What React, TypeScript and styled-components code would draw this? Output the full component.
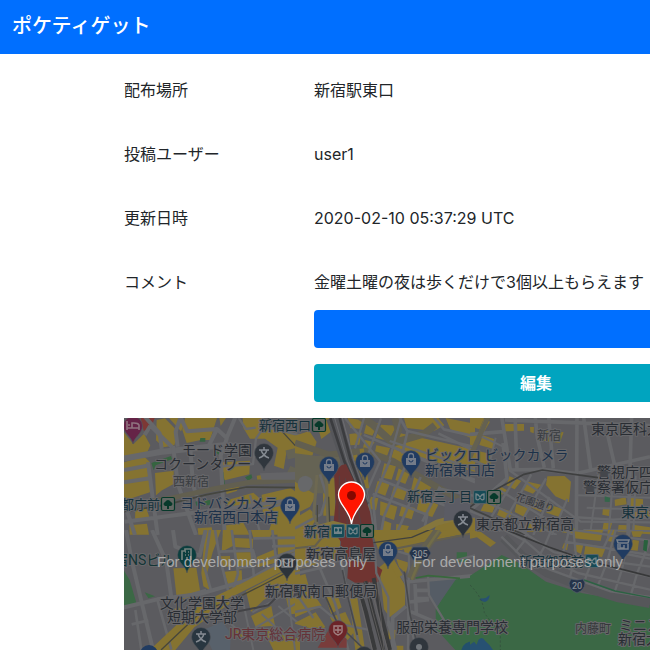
import React from "react";
import styled, { createGlobalStyle, css } from "styled-components";

const GlobalStyle = createGlobalStyle`
  *, *::before, *::after { box-sizing: border-box; }
  html, body { margin: 0; }
  body {
    background: #fff;
    color: #212529;
    font-family: Inter, "Noto Sans CJK JP", sans-serif;
    font-size: 16px;
    line-height: 24px;
  }
`;

const Page = styled.div`
  display: flex;
  flex-direction: column;
  min-height: 100vh;
  overflow: hidden;
`;

const Navbar = styled.header`
  display: flex;
  align-items: center;
  height: 54px;
  padding: 0 12px 2px;
  background: #006fff;
`;

const Brand = styled.a`
  color: #fff;
  font-size: 20px;
  font-weight: 500;
  line-height: 30px;
  text-decoration: none;
`;

const Content = styled.main`
  display: flex;
  flex: 1;
  flex-direction: column;
  padding: 24px 0 0 124px;
`;

const Details = styled.dl`
  display: grid;
  grid-template-columns: 190px minmax(444px, 1fr);
  row-gap: 40px;
  margin: 0;
`;

const Label = styled.dt``;

const Value = styled.dd`
  margin: 0;
  white-space: nowrap;
`;

const Actions = styled.div`
  display: grid;
  width: 444px;
  gap: 16px;
  margin: 16px 0 16px 190px;
`;

const Button = styled.button<{ $tone: "primary" | "info" }>`
  height: 38px;
  border: 0;
  border-radius: 4px;
  color: #fff;
  font: inherit;
  font-weight: 600;
  cursor: pointer;
  ${({ $tone }) =>
    $tone === "primary"
      ? css`background: #006fff;`
      : css`background: #00a4bf;`}
`;

const MapPanel = styled.section`
  flex: 1;
  display: flex;
  min-height: 232px;
  overflow: hidden;
  background: #5b5b60;
`;

const MapDrawing = styled.svg`
  display: block;
  width: 100%;
  height: auto;
  font-family: Roboto, "Noto Sans CJK JP", sans-serif;
`;

const Y = "#857331";
const ROAD = "#67686b";
const GREEN = "#3b6845";
const MAIN = "#625f50";

const Tile = ({ x, y, children }: { x: number; y: number; children: React.ReactNode }) => (
  <svg x={x} y={y} width="180" height="120" viewBox="0 0 540 360">{children}</svg>
);

type RoadProps = { d: string; w?: number; c?: string };
const Road = ({ d, w = 9, c = ROAD }: RoadProps) => (
  <path d={d} fill="none" stroke={c} strokeWidth={w} strokeLinejoin="round" />
);

type PlaceProps = { x: number; y: number; size?: number; color?: string; anchor?: "start" | "middle"; rotate?: number; children: string };
const Place = ({ x, y, size = 14, color = "#292d33", anchor = "start", rotate, children }: PlaceProps) => (
  <text
    x={x} y={y} fontSize={size} fill={color} textAnchor={anchor}
    stroke="#67676a" strokeWidth="2" strokeLinejoin="round" paintOrder="stroke"
    transform={rotate ? `rotate(${rotate} ${x} ${y})` : undefined}
  >{children}</text>
);

type PinProps = { x: number; y: number; color: string; kind: "bag" | "school" | "bed" | "hospital" | "shop" | "post" | "building" | "dot" };
const Pin = ({ x, y, color, kind }: PinProps) => (
  <g transform={`translate(${x} ${y})`}>
    <path d="M0 18C-1 11-9 8-9.5 0A9.5 9.5 0 1 1 9.5 0C9 8 1 11 0 18Z" fill={color} stroke="#53565b" strokeWidth=".6" />
    {kind === "bag" && <>
      <path d="M-5-2H5V5H-5Z" fill="#747c89" />
      <path d="M-2.5-2V-4A2.5 2.5 0 0 1 2.5-4V-2" fill="none" stroke="#747c89" strokeWidth="1.3" />
      <path d="M-2 0A2 2 0 0 0 2 0" fill="none" stroke={color} />
    </>}
    {kind === "school" && <path d="M0-6V-3M-5-3H5M-3-3Q-1 3 5 5M3-3Q1 3-5 5" fill="none" stroke="#858b92" strokeWidth="1.5" />}
    {kind === "bed" && <path d="M-6-5V4M-6 2H6V-1Q5-3 1-3H-1V2M6 2V4M-5-1H-3" fill="none" stroke="#907480" strokeWidth="1.6" />}
    {kind === "hospital" && <path d="M-4-4H4V2Q3 4 0 5Q-3 4-4 2ZM0-3V3M-3 0H3" fill="none" stroke="#a08182" strokeWidth="1.4" />}
    {kind === "shop" && <path d="M-6-4H6L5-1H-5ZM-5 0V5H5V0M-3 0V4H1V1" fill="none" stroke="#77808a" strokeWidth="1.5" />}
    {kind === "post" && <path d="M-5-4H5V4H-5ZM-5-3L0 1L5-3" fill="none" stroke="#777b81" strokeWidth="1.3" />}
    {kind === "building" && <path d="M-5 5V-4H-2V-6H4V5M-2-3H-1M1-3H2M-2 0H-1M1 0H2M0 5V2" fill="none" stroke="#72807c" strokeWidth="1.7" />}
    {kind === "dot" && <circle r="3" fill="#72767b" />}
  </g>
);

type StationProps = { x: number; y: number; kind: "tree" | "metro" | "train" };
const Station = ({ x, y, kind }: StationProps) => (
  <g transform={`translate(${x} ${y})`}>
    <rect x="-6.5" y="-6.5" width="13" height="13" rx="1.5" fill={kind === "tree" ? "#626763" : "#164b57"} stroke={kind === "tree" ? "#07392a" : "#536267"} strokeWidth="1.2" />
    {kind === "tree" && <path d="M-1 5V2H-3Q-6 0-3-2Q0-6 3-2Q6 0 3 2H1V5Z" fill="#07392a" />}
    {kind === "metro" && <path d="M-4-3Q-2-3 0 0Q2-3 4-3V2Q2 4 0 1Q-2 4-4 2Z" fill="none" stroke="#738488" strokeWidth="1.3" />}
    {kind === "train" && <><path d="M-4-4H4V3H-4Z" fill="#738488" /><path d="M-3-2H-1V0H-3M1-2H3V0H1M-3 5L-1 3M3 5L1 3" stroke="#164b57" fill="#164b57" /></>}
  </g>
);

const MapTerrain = () => (
  <>
    <rect x="124" y="418" width="526" height="232" fill="#5b5b5f" />
    <Tile x={120} y={415}>
      <path fill={Y} d="M12 52L40 88 72 56 91 91 82 112 12 124ZM12 142L72 124 90 142 94 230 12 257ZM105 174L161 167V207L126 226 108 241ZM110 15L135 10 174 50 163 91 130 97 108 76ZM147 9H180L191 31 183 49ZM195 9H291L270 75 242 75 200 84 187 45ZM298 9H318L302 33ZM307 142L390 137 388 178 314 196 301 169ZM368 9H430L446 40 530 55V125L500 108 491 162 462 152 473 98 435 71 390 71 370 39ZM410 182L452 176 470 198 413 202ZM315 219L367 204 350 228 320 237ZM310 259L400 233 421 252 400 276H330ZM425 239L512 219 540 240V340L490 359H443L461 304 429 299ZM310 332L370 323 389 359H310ZM233 340L275 337 279 359H235ZM46 283L78 276 89 310 45 319ZM28 331L81 326 87 359H29Z" />
      <path fill="#7d3835" d="M62 9H104L91 44 71 47Z" />
      <path fill="#366440" d="M94 144L153 123 156 133 107 151 101 166ZM241 69H256V80H239ZM287 85L300 100 296 119 286 111ZM300 171H310L315 210 304 201ZM226 260L270 255 273 270 229 272ZM375 187L394 178 397 188 385 198Z" />
      <Road d="M12 131L120 111 310 91 390 96" w={18} />
      <Road d="M70 0L119 55 125 102M90 31L156 96M91 32L74 60M184 0L167 50 173 95M178 0L202 49 291 42 320 69 349 0M291 42L267 91M321 69L302 121 314 360" w={12} />
      <Road d="M84 142L113 360M159 93L174 209 228 360M211 100L219 210 234 256M12 165L90 151M12 202L89 190M14 320L540 252M20 285L45 360" w={12} />
      <Road d="M300 155L399 147 408 71 433 35 540 61M402 203L540 199M311 300L540 260M390 240L422 360M350 0L378 42 407 38" w={7} />
      <Road d="M12 270L150 250 280 222 390 202 540 195" w={15} c={MAIN} />
      <Road d="M500 120L540 110M505 165L540 180" w={28} c="#656354" />
      <Road d="M500 0L540 28" w={18} c={MAIN} />
      <Road d="M12 290L140 269 260 239 380 216 540 218" w={5} c="#454640" />
      <Road d="M435 0L472 34 540 107" w={4} c="#454640" />
      <path d="M420 175L540 170V194H425Z" fill="#646467" />
    </Tile>
    <Tile x={120} y={530}>
      <path fill={Y} d="M160 115L229 113 242 193 171 212ZM255 0H303L278 67 258 142 270 181 250 169 244 130 250 62ZM309 0H334L344 45 305 65ZM343 24L399 26V55L343 51ZM342 67H397V105L355 119ZM300 79L330 78 332 111 308 108ZM313 125L365 121 367 164 327 174ZM378 184L540 98V150L430 211 393 246ZM393 0H455L451 24 401 27ZM472 0H540V60L474 81ZM410 81L465 58V99L411 112ZM160 240L175 229 188 247 153 262ZM129 345L265 221 323 197 329 221 223 292 166 360H119ZM393 258L454 228 465 287 407 291ZM432 302L477 295 540 330V360H460ZM490 167L540 155V250L509 253ZM340 291L380 304 370 321 324 319Z" />
      <path fill={GREEN} d="M12 122L29 150 49 218 12 233ZM74 187L105 199 85 205Z" />
      <path fill="#58616b" d="M248 301L306 275 333 310 330 360H277Z" />
      <Road d="M18 0L35 90 99 360M96 0L139 95 155 210M159 0L166 50 239 77 257 0M0 235L112 208 239 192 390 148 540 63" w={12} />
      <Road d="M46 240L64 360M35 283L85 271M112 209L154 359M155 210L258 180M270 0L253 110 273 181M285 0L299 81 324 181M335 0L354 131 335 193M299 65L399 61 410 100 540 54M352 113L399 109M389 0L402 144M457 0L472 115M400 25L540 23M456 49L540 47" w={8} />
      <Road d="M370 220L400 360M397 247L500 190M406 293L540 213M500 160L525 360M330 280L390 330M425 252L509 330M475 228L540 284" w={6} />
      <Road d="M106 360L242 233 355 178 540 84" w={23} c={Y} />
      <Road d="M123 360L245 244 348 205 422 168 540 107" w={4} c="#47463c" />
      <Road d="M236 267L355 244 445 226 481 191 540 175" w={6} c="#434346" />
    </Tile>
    <Tile x={295} y={415}>
      <path fill={Y} d="M0 62L43 48 65 81 52 122 0 132ZM60 9H110V49L79 72ZM158 9L205 16 198 42 166 39ZM163 57L200 53 193 89 166 91ZM217 14L250 26 232 62 207 55ZM258 29L305 32 280 78 242 68ZM313 54L540 104V170L420 141 328 110 294 91ZM327 9H430L448 31 417 48 335 39ZM452 9L540 26V74L466 43ZM209 75L239 82 220 107 203 104ZM244 91L285 99 274 129 238 119ZM297 101L332 118 320 146 287 136ZM0 190L60 178 73 223 45 275 0 298ZM83 188H119L121 302H85ZM268 145L303 154 290 194 258 187ZM311 160L344 175 331 207 301 195ZM248 198L284 206 271 242 239 230ZM298 211L337 225 326 256 288 244ZM358 183L413 211 392 242 348 226ZM228 245L250 250 243 286 216 280ZM256 259L307 275 297 315 255 300ZM321 270L360 279 350 313 312 302ZM374 244L430 269 412 306 364 291ZM265 316L289 325 286 350H258ZM425 325L540 292V360H414ZM304 327L342 333 330 360H302ZM0 310L45 283 68 307 45 342 0 350Z" />
      <path fill="#656354" d="M0 115L65 123 139 112 131 171 95 190 90 235 54 235 0 200Z" />
      <path fill="#67686a" d="M14 190Q30 175 48 190Q60 205 43 225Q20 238 12 222Q4 205 14 190Z" />
      <Road d="M0 83L101 119 210 107 295 139 412 208 540 280" w={19} c={MAIN} />
      <Road d="M195 5L231 27 294 84 388 56 420 31M294 84L310 45 300 9" w={22} c="#625f51" />
      <Road d="M150 9L204 76 255 139 215 230 238 350M207 9L180 100M258 10L221 113M318 9L284 132M206 60L540 194M237 73L540 202M284 78L540 163" w={7} />
      <Road d="M286 133L234 256 244 360M331 153L267 304 257 360M377 186L303 360M252 193L540 307M233 237L397 299 384 360M435 215L382 320M540 243L433 221" w={8} />
      <Road d="M309 0L337 48 540 96M410 0L447 43 540 64M338 48L322 116M430 55L540 109M0 340L78 298 95 243 75 178" w={8} />
      <Road d="M200 101L216 220M180 120L205 230" w={13} c={Y} />
      <Road d="M112 9L152 125 190 210 205 270" w={38} c="#55565a" />
      <Road d="M106 9L148 139 180 210M134 9L166 130 215 270" w={8} c="#3b3c3f" />
      <Road d="M119 9L157 139 194 230M142 9L177 139 220 260" w={2} c="#75767a" />
      <path fill="#6b3432" d="M139 151L153 147 176 195 206 238 225 290 235 360H112L122 260 117 173Z" />
      <Road d="M133 182L132 360M151 190L158 360M180 240L205 360" w={3} c="#574044" />
      <Road d="M66 180L56 300 80 360M94 173L100 360" w={9} c="#6d6852" />
      <Road d="M67 270V320M101 245L105 345" w={4} c="#48483f" />
      <Road d="M0 357L115 327 211 351 303 360M356 360L426 323 540 292" w={18} c="#85763c" />
      <path fill="#5b5c64" d="M449 263L491 248 540 273V307L446 319Z" />
    </Tile>
    <Tile x={295} y={530}>
      <path fill={Y} d="M0 0H135V86L62 103 0 121ZM0 141L31 132 42 172 80 227 0 262ZM229 0H540L475 19 375 38 320 60 249 57ZM253 112L284 87 331 167 330 228 284 262 267 238ZM0 278L62 247 91 291 72 303 0 281ZM91 198L126 192 140 232 108 252ZM105 262L151 246 178 305 158 330 127 300ZM162 203L187 203 210 360H181ZM326 55L350 48 352 80 330 73ZM281 299L302 300 300 328H280ZM304 86L342 98 332 130 312 111ZM283 347H325V360H282Z" />
      <Road d="M0 119L58 94 139 92 150 156 192 346M49 55L120 220 160 360M0 131L84 112 145 84" w={8} />
      <path fill="#703431" d="M112 0H220L232 25 246 108 262 120 249 157 180 158 157 145 160 99 134 77 138 35Z" />
      <path fill={GREEN} d="M482 142L540 132V360H481L423 297 422 238ZM485 67L516 67V96L485 95Z" />
      <path fill="#555c65" d="M401 143L489 139 425 231 401 195Z" />
      <path fill="#793c3b" d="M111 285L155 327V353H68L93 313Z" />
      <Road d="M284 82L333 156 343 254 365 360M333 156L540 137M344 216L402 209M347 245L430 280M360 162L364 249M360 181H401M362 206H401M333 229L293 262V360M280 273L302 360" w={11} />
      <Road d="M0 246L75 230 140 283 233 302M0 186L55 264M240 60L244 130 280 202 280 289M300 62L342 74 339 360M399 139L402 195 465 300M445 100L540 76" w={7} />
      <Road d="M187 160L213 246 240 360M211 154L235 251 265 360M236 144L256 246 285 360" w={12} c="#393a3b" />
      <Road d="M183 160L232 360M209 155L263 360M223 155L278 360M245 130L267 360" w={2} c="#6d6a68" />
      <Road d="M92 200L128 282 210 360M142 120L160 208 187 315M328 125L345 252 370 360" w={5} c="#48494c" />
      <Road d="M0 22L45 38 110 0M249 50L390 15 540 0M248 28L284 82 315 139" w={17} c={Y} />
      <Road d="M235 38L350 22 430 -12" w={4} c="#40413e" />
      <Road d="M0 55L60 48 100 0M273 91L300 56 540 8" w={6} c="#635f50" />
      <Road d="M347 145L378 71 430 0" w={25} c="#646150" />
      <Road d="M350 149L380 77 433 0" w={8} c="#716c48" />
      <Road d="M362 144L400 137 495 145" w={5} c="#39683c" />
      <path d="M499 360Q505 333 540 334V360Z" fill="#22506c" />
    </Tile>
    <Tile x={470} y={415}>
      <path fill={Y} d="M0 9H42L28 43 0 33ZM42 11L60 20 36 61 25 54ZM105 27H162V47L105 49ZM180 36L192 36 191 55 181 51ZM205 45L281 52 269 84 205 75ZM0 49L26 61 12 92 0 89ZM38 61L72 72 70 102 28 90ZM0 103L64 117 61 149 0 140ZM116 149L125 161 115 164ZM232 184L284 183 303 200 297 262 256 244 228 210ZM118 184L154 198 134 223 109 211ZM174 200L214 209 189 236 159 224ZM85 211L112 226 96 239 80 229ZM45 260L78 267 67 293 32 287ZM90 278L126 291 117 315 81 300ZM139 267L181 282 163 306 134 291ZM176 247L229 262 213 291 168 270ZM237 269L281 282 270 307 229 293ZM399 277L421 281 417 303 397 299ZM434 254L467 247 470 268 435 273ZM477 247L519 253V276L478 273ZM488 291L540 287V312L490 310ZM446 330L477 331 475 352 443 351ZM402 318L427 321 419 350 397 345ZM170 321L228 330 220 350H161ZM286 333L322 343 315 358 276 352ZM488 329L540 337V358L487 354Z" />
      <Road d="M0 58L100 50M105 15L540 32M99 84L111 191 0 287M94 0L121 165 217 163 319 176M135 0L141 166M195 0L202 68 223 158M236 9L250 160M321 0L319 360M340 0L363 171M412 55L440 177M485 0L474 360M540 125L326 174" w={11} />
      <Road d="M117 165L332 320 540 322M84 223L308 360M42 258L260 360M0 288L176 360M138 187L55 320M184 178L87 349M228 190L132 360M238 246L190 360M292 252L245 360M306 306L430 314 540 308" w={7} />
      <Road d="M353 203L540 219M323 241L540 248M385 180L360 360M430 181L416 355M497 182L490 360M350 278L540 284M340 345L540 348M0 131L69 162M24 60L98 94M77 68L61 134" w={6} />
      <Road d="M57 0L0 126" w={14} c="#646151" />
      <Road d="M0 276L51 238 162 178 217 165 384 188" w={5} c="#3e3f3f" />
      <Road d="M0 279L54 303 138 349 170 360" w={5} c="#424342" />
      <path d="M404 244L420 248 419 261 404 260Z" fill="#34664a" />
    </Tile>
    <Tile x={470} y={530}>
      <path fill={Y} d="M0 0L33 6 78 38 61 51 21 22 0 26ZM309 0H399L392 33 312 25ZM282 40L295 39 291 61 276 55ZM319 38L340 44 333 72 311 61ZM347 43L408 51 396 81 342 73ZM488 29L507 32 503 62 481 60ZM414 0H436L427 36 410 32ZM484 4H520L511 21 489 20Z" />
      <path fill={GREEN} d="M95 75L149 100 228 155 338 190 455 210 540 224V360H0V137L63 97Z" />
      <Road d="M101 23L157 80 230 127 324 165 441 202 540 220" w={28} c="#56575a" />
      <Road d="M94 20L151 76 240 119 328 151 422 184 540 201" w={7} />
      <Road d="M102 0L165 32 217 77 324 129 540 179M150 0L251 66 394 107 540 140M136 67L163 33 168 0M193 104L223 50 244 0M248 123L285 54 297 0M300 140L318 77 310 0M342 157L372 75M384 166L412 94 437 0M433 189L456 118 480 0M482 197L502 128 540 33M284 35L540 75M313 0L540 32M253 67L450 98 540 110M400 55L426 0M469 72L540 86" w={7} />
      <Road d="M110 0L236 51 357 93 540 139" w={5} c="#373839" />
      <path d="M34 205Q46 208 59 195Q58 212 45 216Q34 216 28 208ZM0 344L12 335 20 344 25 330Q37 317 45 332L59 346 69 360H0Z" fill="#275172" />
      <path d="M0 165Q39 203 43 248Q60 273 91 310L91 360" fill="none" stroke="#344c3c" strokeWidth="2" strokeDasharray="7 6" />
      <path d="M342 150L435 183 540 203" fill="none" stroke="#2c6243" strokeWidth="4" />
      <path d="M522 30L534 31 530 65 519 60Z" fill="#28613d" />
    </Tile>
  </>
);

const StationMap = () => (
  <MapDrawing viewBox="124 418 526 232" preserveAspectRatio="xMinYMin slice" role="img" aria-label="新宿駅周辺の地図">
    <MapTerrain />
    <Place x={259} y={430} size={13} color="#15313b">新宿西口</Place>
    <Place x={182} y={455}>モード学園</Place>
    <Place x={154} y={469}>コクーンタワー</Place>
    <Place x={173} y={486} size={12} color="#393c40">西新宿</Place>
    <Place x={121} y={509} size={13} color="#15313b">都庁前</Place>
    <Place x={180} y={508} color="#1c3149">ヨドバシカメラ</Place>
    <Place x={194} y={522} color="#1c3149">新宿西口本店</Place>
    <Place x={425} y={460} color="#1c3149">ビックロ ビックカメラ</Place>
    <Place x={425} y={475} color="#1c3149">新宿東口店</Place>
    <Place x={537} y={440} size={12} color="#393c40">新宿</Place>
    <Place x={591} y={434}>東京医科大学</Place>
    <Place x={597} y={477}>警視庁四谷</Place>
    <Place x={583} y={492}>警察署仮庁舎</Place>
    <Place x={407} y={501} size={13} color="#15313b">新宿三丁目</Place>
    <Place x={515} y={500} size={10} color="#34363a" rotate={18}>花園通り</Place>
    <Place x={621} y={517} color="#15313b">東京都</Place>
    <Place x={476} y={529}>東京都立新宿高</Place>
    <Place x={304} y={536} size={13} color="#15313b">新宿</Place>
    <Place x={306} y={559}>新宿高島屋</Place>
    <Place x={114} y={565} color="#143536">宿NSビル</Place>
    <Place x={519} y={566} size={13} color="#15313b">新宿御苑前</Place>
    <Place x={265} y={596}>新宿駅南口郵便局</Place>
    <Place x={160} y={608}>文化学園大学</Place>
    <Place x={167} y={622}>短期大学部</Place>
    <Place x={225} y={639} color="#653237">JR東京総合病院</Place>
    <Place x={396} y={632}>服部栄養専門学校</Place>
    <Place x={575} y={633} size={12} color="#35393b">内藤町</Place>
    <Place x={619} y={630}>ミニストップ</Place>
    <Place x={618} y={644}>新宿大京町</Place>
    <Pin x={133} y={426} color="#652347" kind="bed" />
    <Pin x={264} y={453} color="#30363d" kind="school" />
    <Pin x={290} y={506} color="#203b61" kind="bag" />
    <Pin x={329} y={466} color="#203b61" kind="bag" />
    <Pin x={365} y={462} color="#203b61" kind="bag" />
    <Pin x={411} y={460} color="#203b61" kind="bag" />
    <Pin x={463} y={520} color="#2c333a" kind="school" />
    <Pin x={187} y={555} color="#0c3e3e" kind="building" />
    <Pin x={287} y={563} color="#2c333a" kind="post" />
    <Pin x={388} y={551} color="#203b61" kind="bag" />
    <Pin x={623} y={544} color="#203b61" kind="shop" />
    <Pin x={201} y={637} color="#293640" kind="school" />
    <Pin x={338} y={630} color="#6c2428" kind="hospital" />
    <Pin x={419} y={647} color="#30363d" kind="dot" />
    <Pin x={364} y={656} color="#30363d" kind="dot" />
    <circle cx="149" cy="654" r="9" fill="#203b61" />
    <Station x={319} y={425} kind="tree" />
    <Station x={168} y={504} kind="tree" />
    <Station x={480} y={497} kind="metro" />
    <Station x={494} y={497} kind="tree" />
    <Station x={338} y={531} kind="train" />
    <Station x={353} y={531} kind="metro" />
    <Station x={367} y={531} kind="tree" />
    <Station x={592} y={561} kind="metro" />
    <path d="M413 547H427L431 553 427 560H413L409 553Z" fill="#24334a" stroke="#525b67" strokeWidth=".8" />
    <text x="420" y="557" textAnchor="middle" fontSize="9" fontWeight="500" fill="#858a91">305</text>
    <path d="M571 579Q577 581 583 579L585 583Q585 590 577 593Q569 590 569 583Z" fill="#24334a" stroke="#525b67" strokeWidth=".8" />
    <text x="577" y="589" textAnchor="middle" fontSize="9" fontWeight="500" fill="#858a91">20</text>
    <g fontFamily="'Liberation Sans', sans-serif" fontSize="15" fill="#a9a9a9">
      <text x="157" y="567">For development purposes only</text>
      <text x="413" y="567">For development purposes only</text>
    </g>
    <path d="M351.500 524C350 510 338.500 505 338.500 495A13 13 0 1 1 364.500 495C364.500 505 353 510 351.500 524Z" fill="#ff1500" stroke="#fff" strokeWidth="1.300" />
    <circle cx="351.500" cy="495.500" r="4.500" fill="#850800" />
  </MapDrawing>
);

const details = [
  ["配布場所", "新宿駅東口"],
  ["投稿ユーザー", "user1"],
  ["更新日時", "2020-02-10 05:37:29 UTC"],
  ["コメント", "金曜土曜の夜は歩くだけで3個以上もらえます"],
];

export default function App() {
  return (
    <Page>
      <GlobalStyle />
      <Navbar><Brand href="#">ポケティゲット</Brand></Navbar>
      <Content>
        <Details>
          {details.map(([label, value]) => (
            <React.Fragment key={label}>
              <Label>{label}</Label>
              <Value>{value}</Value>
            </React.Fragment>
          ))}
        </Details>
        <Actions>
          <Button $tone="primary" type="button" aria-label="送信" />
          <Button $tone="info" type="button">編集</Button>
        </Actions>
        <MapPanel><StationMap /></MapPanel>
      </Content>
    </Page>
  );
}
